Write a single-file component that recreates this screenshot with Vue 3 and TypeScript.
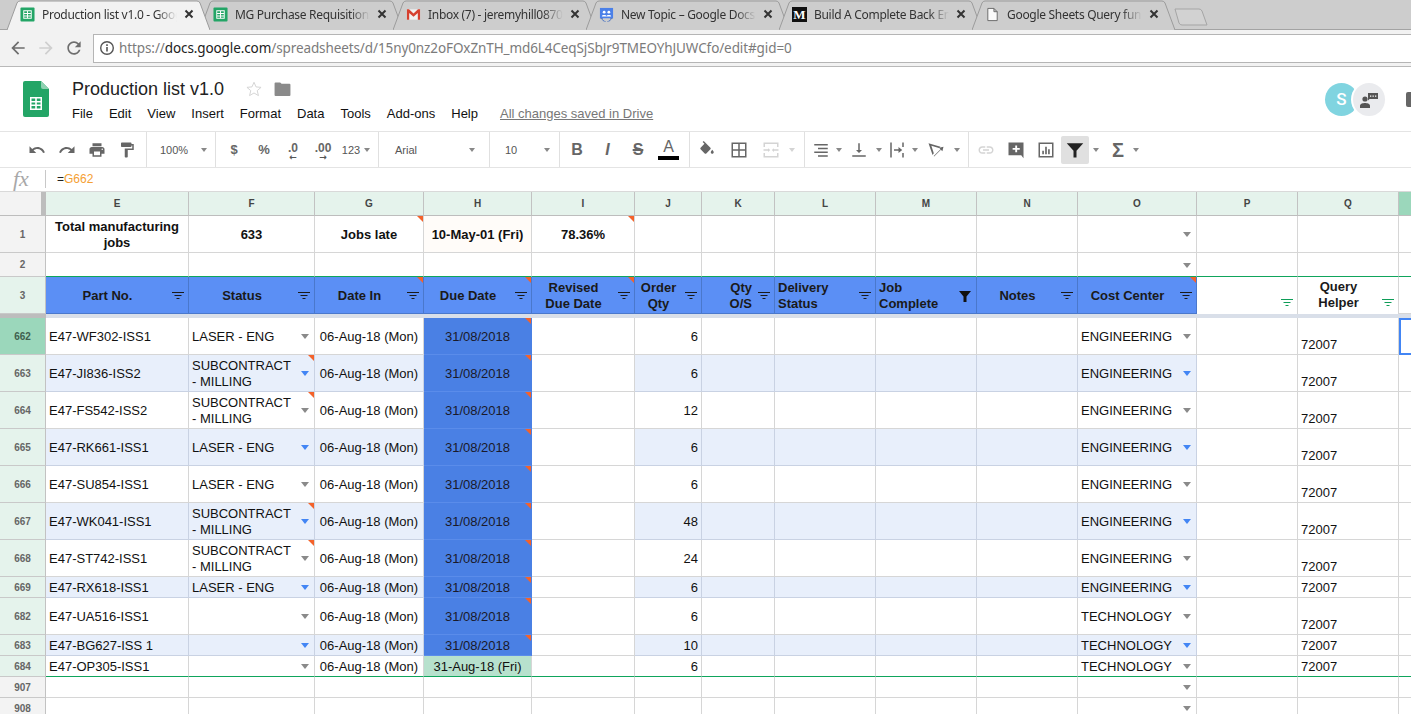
<script setup lang="ts">
interface Tool { w: number; t?: string; d?: string; cls?: string; caret?: boolean; arrow?: string; off?: boolean }
interface Group { w: number; pad: number; items: Tool[] }

const ic = {
  undo: 'M12.5 8c-2.65 0-5.05.99-6.9 2.6L2 7v9h9l-3.62-3.62c1.39-1.16 3.16-1.88 5.12-1.88 3.54 0 6.55 2.31 7.6 5.5l2.37-.78C21.08 11.03 17.15 8 12.5 8z',
  redo: 'M18.4 10.6C16.55 8.99 14.15 8 11.5 8c-4.65 0-8.58 3.03-9.96 7.22L3.9 16c1.05-3.19 4.05-5.5 7.6-5.5 1.95 0 3.73.72 5.12 1.88L13 16h9V7l-3.6 3.6z',
  print: 'M19 8H5c-1.66 0-3 1.34-3 3v6h4v4h12v-4h4v-6c0-1.66-1.34-3-3-3zm-3 11H8v-5h8v5zm3-7c-.55 0-1-.45-1-1s.45-1 1-1 1 .45 1 1-.45 1-1 1zm-1-9H6v4h12V3z',
  paint: 'M18 4V3c0-.55-.45-1-1-1H5c-.55 0-1 .45-1 1v4c0 .55.45 1 1 1h12c.55 0 1-.45 1-1V6h1v4H9v11c0 .55.45 1 1 1h2c.55 0 1-.45 1-1v-9h8V4h-3z',
  fill: 'M16.56 8.94L7.62 0 6.21 1.41l2.38 2.38-5.15 5.15c-.59.59-.59 1.54 0 2.12l5.5 5.5c.29.29.68.44 1.06.44s.77-.15 1.06-.44l5.5-5.5c.59-.58.59-1.53 0-2.12zM19 11.5s-2 2.17-2 3.5c0 1.1.9 2 2 2s2-.9 2-2c0-1.33-2-3.5-2-3.5z',
  borders: 'M2 2v20h20V2H2zm9 18H4v-7h7v7zm0-9H4V4h7v7zm9 9h-7v-7h7v7zm0-9h-7V4h7v7z',
  merge: 'M2 2h20v6h-2V4H4v4H2zM2 16h2v4h16v-4h2v6H2zM2 11h6v2H2zM16 11h6v2h-6zM11 12l-3-2.500v5zM13 12l3-2.500v5z',
  align: 'M3 4h18v2H3zM8 9h13v2H8zM3 14h18v2H3zM8 19h13v2H8z',
  valign: 'M16 12h-3V3h-2v9H8l4 4 4-4zM3 19v2h18v-2H3z',
  wrap: 'M3 2h2v20H3zM19 2h2v6h-2zM19 16h2v6h-2zM8 11h6V8l5 4-5 4v-3H8z',
  rotate: 'M2 3l16 4.500-2.200 1.700-10-2.900 3.300 10-1.700 2.200zM9 20l9-9-2-2 6-1.500-1.500 6-2-2-9 9z',
  link: 'M3.9 12c0-1.71 1.39-3.1 3.1-3.1h4V7H7c-2.76 0-5 2.24-5 5s2.24 5 5 5h4v-1.9H7c-1.71 0-3.1-1.39-3.1-3.1zM8 13h8v-2H8v2zm9-6h-4v1.9h4c1.71 0 3.1 1.39 3.1 3.1s-1.39 3.1-3.1 3.1h-4V17h4c2.76 0 5-2.24 5-5s-2.24-5-5-5z',
  comment: 'M2 2h20v21l-3-4H2zM11 6h2.500v3.300H17v2.400h-3.500V15H11v-3.300H7.500V9.300H11z',
  chart: 'M2 2h20v20H2zM4 4v16h16V4zM7 13h2.200v4.500H7zM10.900 7.500h2.200v10h-2.200zM14.800 11h2.200v6.500h-2.200z',
  filter: 'M1 3h22l-9 10v9h-4v-9z',
}

const groups: Group[] = [
  { w: 147, pad: 22, items: [{ w: 30, d: ic.undo }, { w: 30, d: ic.redo }, { w: 30, d: ic.print }, { w: 30, d: ic.paint }] },
  { w: 69, pad: 13, items: [{ w: 28, t: '100%', cls: 'tx11' }, { w: 32, caret: true }] },
  { w: 163, pad: 3, items: [{ w: 30, t: '$', cls: 'tx-b' }, { w: 30, t: '%', cls: 'tx-b' }, { w: 28, t: '.0', arrow: '←', cls: 'tx-b tx-dec' }, { w: 32, t: '.00', arrow: '→', cls: 'tx-b tx-dec' }, { w: 24, t: '123', cls: 'tx11' }, { w: 8, caret: true }] },
  { w: 111, pad: 16, items: [{ w: 60, t: 'Arial', cls: 'tx11 tx-l' }, { w: 34, caret: true }] },
  { w: 70, pad: 15, items: [{ w: 24, t: '10', cls: 'tx11 tx-l' }, { w: 36, caret: true }] },
  { w: 130, pad: 2, items: [{ w: 30, t: 'B', cls: 'tx-big tx-bold' }, { w: 31, t: 'I', cls: 'tx-big tx-bold tx-it' }, { w: 30, t: 'S', cls: 'tx-big tx-strike' }, { w: 31, t: 'A', cls: 'tx-big tx-color' }] },
  { w: 115, pad: 2, items: [{ w: 30, d: ic.fill }, { w: 34, d: ic.borders }, { w: 30, d: ic.merge, off: true }, { w: 12, caret: true, off: true }] },
  { w: 164, pad: 2, items: [{ w: 28, d: ic.align }, { w: 8, caret: true }, { w: 32, d: ic.valign }, { w: 8, caret: true }, { w: 28, d: ic.wrap }, { w: 8, caret: true }, { w: 34, d: ic.rotate }, { w: 8, caret: true }] },
  { w: 180, pad: 2, items: [{ w: 30, d: ic.link, off: true }, { w: 30, d: ic.comment }, { w: 30, d: ic.chart }, { w: 28, d: ic.filter, cls: 'active' }, { w: 3 }, { w: 8, caret: true }, { w: 4 }, { w: 28, t: 'Σ', cls: 'tx-sigma' }, { w: 8, caret: true }] },
]

const tabs = [
  { title: 'Production list v1.0 - Google Sheets', icon: 'sheet', active: true },
  { title: 'MG Purchase Requisitions - Google', icon: 'sheet' },
  { title: 'Inbox (7) - jeremyhill0870@gmail.com', icon: 'gmail' },
  { title: 'New Topic – Google Docs Help Forum', icon: 'docs' },
  { title: 'Build A Complete Back End with', icon: 'medium' },
  { title: 'Google Sheets Query function tutorial', icon: 'file' },
]

const menu = ['File', 'Edit', 'View', 'Insert', 'Format', 'Data', 'Tools', 'Add-ons', 'Help']
const letters = ['E', 'F', 'G', 'H', 'I', 'J', 'K', 'L', 'M', 'N', 'O', 'P', 'Q']

const sub = 'SUBCONTRACT\n- MILLING'
const laser = 'LASER - ENG'
const eng = 'ENGINEERING'
const tech = 'TECHNOLOGY'

const heads = [
  { t: 'Part No.', c: 'c' }, { t: 'Status', c: 'c' }, { t: 'Date In', c: 'c', note: true }, { t: 'Due Date', c: 'c', note: true },
  { t: 'Revised\nDue Date', c: 'c', note: true }, { t: 'Order\nQty', c: 'c' }, { t: 'Qty\nO/S', c: 'r' }, { t: 'Delivery\nStatus', c: 'l' },
  { t: 'Job\nComplete', c: 'l', on: true }, { t: 'Notes', c: 'c' }, { t: 'Cost Center', c: 'c', note: true },
]

const rows = [
  { n: 662, cls: 'tall', part: 'E47-WF302-ISS1', st: laser, qty: '6', cost: eng, sel: true },
  { n: 663, cls: 'tall band', part: 'E47-JI836-ISS2', st: sub, qty: '6', cost: eng, sn: true },
  { n: 664, cls: 'tall', part: 'E47-FS542-ISS2', st: sub, qty: '12', cost: eng, sn: true },
  { n: 665, cls: 'tall band', part: 'E47-RK661-ISS1', st: laser, qty: '6', cost: eng },
  { n: 666, cls: 'tall', part: 'E47-SU854-ISS1', st: laser, qty: '6', cost: eng },
  { n: 667, cls: 'tall band', part: 'E47-WK041-ISS1', st: sub, qty: '48', cost: eng, sn: true },
  { n: 668, cls: 'tall', part: 'E47-ST742-ISS1', st: sub, qty: '24', cost: eng, sn: true },
  { n: 669, cls: 'short band', part: 'E47-RX618-ISS1', st: laser, qty: '6', cost: eng },
  { n: 682, cls: 'tall', part: 'E47-UA516-ISS1', st: '', qty: '6', cost: tech },
  { n: 683, cls: 'short band', part: 'E47-BG627-ISS 1', st: '', qty: '10', cost: tech },
  { n: 684, cls: 'short last', part: 'E47-OP305-ISS1', st: '', qty: '6', cost: tech },
]
</script>

<template>
  <div class="page">
    <div class="tabstrip">
      <div v-for="tab in tabs" :key="tab.title" class="tab" :class="{ on: tab.active }">
        <svg class="tabshape" viewBox="0 0 203 30" preserveAspectRatio="none">
          <path d="M0 30 L10 3 Q11 1 13 1 L190 1 Q192 1 193 3 L203 30" />
        </svg>
        <svg v-if="tab.icon === 'sheet'" class="fav" viewBox="0 0 16 16">
          <rect x="0.500" y="0.500" width="15" height="15" rx="1" fill="#23a566" />
          <path d="M3.500 3.500h9v9h-9zM4.500 4.500v2h3v-2zM8.500 4.500v2h3v-2zM4.500 7.500v1.500h3V7.500zM8.500 7.500v1.500h3V7.500zM4.500 10v1.500h3V10zM8.500 10v1.500h3V10z" fill="#fff" fill-rule="evenodd" />
        </svg>
        <svg v-else-if="tab.icon === 'gmail'" class="fav" viewBox="0 0 16 16">
          <rect x="1" y="2.500" width="14" height="11" fill="#f1f1f1" />
          <path d="M1 2.500h2.200L8 6.800l4.800-4.300H15v11h-2.400V6.300L8 10.300 3.400 6.300v7.200H1z" fill="#d6402f" />
        </svg>
        <svg v-else-if="tab.icon === 'docs'" class="fav" viewBox="0 0 16 16">
          <rect x="1" y="1" width="14" height="11" fill="#4b80e8" />
          <path d="M1 12h14l-7 4-7-4z M4 12v3l4 1 4-1v-3z" fill="#3a67bf" />
          <circle cx="5.500" cy="5.500" r="1.500" fill="#fff" />
          <circle cx="10.500" cy="5.500" r="1.500" fill="#fff" />
          <path d="M3 10c0-2 5-2 5 0zM8 10c0-2 5-2 5 0z" fill="#fff" />
        </svg>
        <span v-else-if="tab.icon === 'medium'" class="fav fav-m">M</span>
        <svg v-else class="fav" viewBox="0 0 16 16">
          <path d="M3 1.500h6.500L13 5v9.500H3zM9.500 1.500V5H13" fill="#fafafa" stroke="#666" stroke-width="1" />
        </svg>
        <span class="tabtitle">{{ tab.title }}</span>
        <svg class="tabx" viewBox="0 0 10 10"><path d="M1.500 1.500l7 7M8.500 1.500l-7 7" /></svg>
      </div>
      <svg class="newtab" viewBox="0 0 34 18"><path d="M1 1h24q2 0 3 2l5 14H8q-2 0-3-2z" /></svg>
    </div>

    <div class="omnirow">
      <svg class="nav" viewBox="0 0 24 24"><path d="M20 11H7.830l5.590-5.590L12 4l-8 8 8 8 1.410-1.410L7.830 13H20v-2z" fill="#6e6e6e" /></svg>
      <svg class="nav" viewBox="0 0 24 24"><path d="M4 11h12.170l-5.590-5.590L12 4l8 8-8 8-1.410-1.410L16.170 13H4v-2z" fill="#cfcfcf" /></svg>
      <svg class="nav" viewBox="0 0 24 24"><path d="M17.650 6.350C16.200 4.900 14.210 4 12 4c-4.420 0-7.990 3.580-7.990 8s3.570 8 7.990 8c3.730 0 6.840-2.550 7.730-6h-2.080c-.82 2.330-3.040 4-5.650 4-3.310 0-6-2.690-6-6s2.690-6 6-6c1.660 0 3.140.69 4.220 1.780L13 11h7V4l-2.350 2.350z" fill="#6e6e6e" /></svg>
      <div class="omni">
        <svg class="info" viewBox="0 0 16 16"><circle cx="8" cy="8" r="6.300" fill="none" stroke="#555" stroke-width="1.400" /><path d="M7.200 7h1.600v4.500H7.200zM7.200 4.300h1.600v1.600H7.200z" fill="#555" /></svg>
        <span class="url"><span class="dim">https://</span>docs.google.com<span class="dim">/spreadsheets/d/15ny0nz2oFOxZnTH_md6L4CeqSjSbJr9TMEOYhJUWCfo/edit#gid=0</span></span>
      </div>
    </div>

    <header class="docbar">
      <svg class="logo" viewBox="0 0 26 36">
        <path d="M2 0h16l8 8v26a2 2 0 0 1-2 2H2a2 2 0 0 1-2-2V2a2 2 0 0 1 2-2z" fill="#23a566" />
        <path d="M18 0l8 8h-6a2 2 0 0 1-2-2z" fill="#8ed1b1" />
        <path d="M7 16h12v13H7zM8.500 17.500v2.500h3.700v-2.500zM13.800 17.500v2.500h3.700v-2.500zM8.500 21.500v2h3.700v-2zM13.800 21.500v2h3.700v-2zM8.500 25v2.500h3.700V25zM13.800 25v2.500h3.700V25z" fill="#fff" fill-rule="evenodd" />
      </svg>
      <div class="docmain">
        <div class="titlerow">
          <span class="doctitle">Production list v1.0</span>
          <svg class="star" viewBox="0 0 24 24"><path d="M12 3l2.700 6.200 6.700.6-5.100 4.400 1.600 6.600L12 17.300l-5.900 3.500 1.600-6.600-5.100-4.400 6.700-.6z" fill="none" stroke="#d4d4d4" stroke-width="1.300" /></svg>
          <svg class="folder" viewBox="0 0 17 15"><path d="M0 1.500q0-1 1-1h5l1.500 1.500H16q1 0 1 1V14q0 1-1 1H1q-1 0-1-1z" fill="#8a8a8a" /></svg>
        </div>
        <nav class="menurow">
          <span v-for="m in menu" :key="m" class="menuitem">{{ m }}</span>
          <span class="saved">All changes saved in Drive</span>
        </nav>
      </div>
      <div class="people">
        <span class="ava-s">S</span>
        <span class="ava-c">
          <svg viewBox="0 0 20 16" width="20" height="16">
            <circle cx="6" cy="7" r="2.600" fill="#555" />
            <path d="M1 16v-2.500c0-1.700 3-2.500 5-2.500s5 .8 5 2.500V16z" fill="#555" />
            <path d="M9 1h10v6h-8.500L9 8.500z" fill="#555" />
            <path d="M11 3.500h1.300v1.300H11zM13.500 3.500h1.300v1.300h-1.300zM16 3.500h1.300v1.300H16z" fill="#fff" />
          </svg>
        </span>
        <span class="cmt"></span>
      </div>
    </header>

    <div class="toolbar">
      <div v-for="(g, gi) in groups" :key="gi" class="tgroup" :style="{ width: g.w + 'px', paddingLeft: g.pad + 'px' }">
        <div v-for="(it, i) in g.items" :key="i" class="titem" :class="[it.cls, { off: it.off }]" :style="{ width: it.w + 'px' }">
          <span v-if="it.caret" class="tcaret"></span>
          <svg v-else-if="it.d" viewBox="0 0 24 24" width="18" height="18"><path :d="it.d" fill-rule="evenodd" /></svg>
          <template v-else-if="it.t">
            <span class="ttext">{{ it.t }}</span>
            <span v-if="it.arrow" class="tarrow">{{ it.arrow }}</span>
            <span v-if="it.cls === 'tx-big tx-color'" class="colorbar"></span>
          </template>
        </div>
      </div>
    </div>

    <div class="formula">
      <span class="fx">fx</span>
      <span class="fsep"></span>
      <span class="ftext">=<span class="fref">G662</span></span>
    </div>

    <div class="sheet">
      <div class="grow chead">
        <div class="corner"></div>
        <div v-for="l in letters" :key="l" class="ch">{{ l }}</div>
        <div class="ch selcol"></div>
      </div>

      <div class="grow r1">
        <div class="rh">1</div>
        <div class="cell bold center">Total manufacturing<br />jobs</div>
        <div class="cell bold center">633</div>
        <div class="cell bold center note">Jobs late</div>
        <div class="cell bold center cream">10-May-01 (Fri)</div>
        <div class="cell bold center note">78.36%</div>
        <div class="cell"></div><div class="cell"></div><div class="cell"></div><div class="cell"></div><div class="cell"></div>
        <div class="cell dd"><span></span><i class="caret"></i></div>
        <div class="cell"></div><div class="cell"></div><div class="edge"></div>
      </div>

      <div class="grow r2">
        <div class="rh">2</div>
        <div class="cell gl"></div><div class="cell gl"></div><div class="cell gl"></div><div class="cell gl"></div><div class="cell gl"></div>
        <div class="cell gl"></div><div class="cell gl"></div><div class="cell gl"></div><div class="cell gl"></div><div class="cell gl"></div>
        <div class="cell gl dd"><span></span><i class="caret"></i></div>
        <div class="cell gl"></div><div class="cell gl"></div><div class="edge gl"></div>
      </div>

      <div class="grow r3">
        <div class="rh active-lite">3</div>
        <div v-for="h in heads" :key="h.t" class="hcell" :class="{ note: h.note }">
          <span class="htext" :class="h.c">{{ h.t }}</span>
          <svg v-if="h.on" class="fon" viewBox="0 0 12 12"><path d="M0 1h12L7.500 6.500V12h-3V6.500z" /></svg>
          <svg v-else class="fico" viewBox="0 0 12 7"><path d="M0 .5h12M2.500 3.500h7M4.500 6.500h3" /></svg>
        </div>
        <div class="hcell plainh"><span class="htext"></span><svg class="fico green" viewBox="0 0 12 7"><path d="M0 .5h12M2.500 3.500h7M4.500 6.500h3" /></svg></div>
        <div class="hcell plainh"><span class="htext c">Query
Helper</span><svg class="fico green" viewBox="0 0 12 7"><path d="M0 .5h12M2.500 3.500h7M4.500 6.500h3" /></svg></div>
        <div class="edge"></div>
      </div>

      <div class="freeze"><div class="fz-rh"></div><div class="fz-main"></div></div>

      <div v-for="r in rows" :key="r.n" class="grow drow" :class="r.cls">
        <div class="rh" :class="r.sel ? 'active' : 'active-lite'">{{ r.n }}</div>
        <div class="cell b">{{ r.part }}</div>
        <div class="cell b dd" :class="{ note: r.sn }"><span class="pre">{{ r.st }}</span><i class="caret"></i></div>
        <div class="cell b center">06-Aug-18 (Mon)</div>
        <div v-if="r.n === 684" class="cell due-green center">31-Aug-18 (Fri)</div>
        <div v-else class="cell due center note">31/08/2018</div>
        <div class="cell"></div>
        <div class="cell b right">{{ r.qty }}</div>
        <div class="cell b"></div>
        <div class="cell b"></div>
        <div class="cell b"></div>
        <div class="cell b"></div>
        <div class="cell b dd"><span>{{ r.cost }}</span><i class="caret"></i></div>
        <div class="cell"></div>
        <div class="cell helper">72007</div>
        <div class="edge" :class="{ picked: r.sel }"></div>
      </div>

      <div v-for="n in [907, 908]" :key="n" class="grow short">
        <div class="rh">{{ n }}</div>
        <div class="cell"></div><div class="cell"></div><div class="cell"></div><div class="cell"></div><div class="cell"></div>
        <div class="cell"></div><div class="cell"></div><div class="cell"></div><div class="cell"></div><div class="cell"></div>
        <div class="cell dd"><span></span><i class="caret"></i></div>
        <div class="cell"></div><div class="cell"></div><div class="edge"></div>
      </div>
    </div>
  </div>
</template>

<style>
html, body { margin: 0; padding: 0; overflow: hidden; background: #fff; }
</style>

<style scoped>
.page { width: 1411px; height: 714px; overflow: hidden; display: flex; flex-direction: column; font-family: "Liberation Sans", Arial, sans-serif; color: #111; }

.tabstrip { height: 30px; flex: none; background: #cdcdcd; display: flex; padding-left: 7px; box-sizing: border-box; border-bottom: 1px solid #a3a3a3; }
.tab { position: relative; width: 203px; height: 30px; margin-right: -10px; display: flex; align-items: center; padding: 0 16px 2px 13px; box-sizing: border-box; flex: none; }
.tabshape { position: absolute; left: 0; top: 0; width: 100%; height: 100%; }
.tabshape path { fill: #cdcdcd; stroke: #9b9b9b; stroke-width: 1; vector-effect: non-scaling-stroke; }
.tab.on { z-index: 2; }
.tab.on .tabshape path { fill: #f2f2f2; }
.fav { position: relative; width: 15px; height: 15px; flex: none; margin-right: 7px; }
.fav-m { background: #111; color: #fff; font: bold 13px/15px "Liberation Serif", serif; text-align: center; }
.tabtitle { position: relative; flex: 1; min-width: 0; white-space: nowrap; overflow: hidden; font: 12px "Noto Sans", sans-serif; letter-spacing: -0.300px; color: #333; -webkit-mask-image: linear-gradient(to right, #000 85%, transparent 100%); mask-image: linear-gradient(to right, #000 85%, transparent 100%); }
.tabx { position: relative; width: 10px; height: 10px; flex: none; margin-left: 7px; }
.tabx path { stroke: #333; stroke-width: 2; fill: none; }
.newtab { width: 34px; height: 18px; margin: 8px 0 0 9px; flex: none; }
.newtab path { fill: #d2d2d2; stroke: #a5a5a5; stroke-width: 1; }

.omnirow { height: 37px; flex: none; background: #f2f2f2; border-bottom: 1px solid #b9b9b9; box-sizing: border-box; display: flex; align-items: center; padding-left: 8px; }
.nav { width: 20px; height: 20px; margin-right: 8px; flex: none; }
.omni { flex: 1; height: 29px; margin-left: 1px; background: #fff; border: 1px solid #b5b5b5; border-right: none; box-sizing: border-box; display: flex; align-items: center; padding-left: 5px; }
.info { width: 16px; height: 16px; margin-right: 4px; }
.url { font: 13.500px "Noto Sans", sans-serif; letter-spacing: -0.100px; color: #222; white-space: nowrap; }
.dim { color: #7b7b7b; }

.docbar { height: 65px; flex: none; display: flex; box-sizing: border-box; padding: 14px 0 0 23px; border-bottom: 1px solid #e4e4e4; }
.logo { width: 26px; height: 36px; flex: none; }
.docmain { margin-left: 23px; display: flex; flex-direction: column; }
.titlerow { display: flex; align-items: center; height: 18px; margin-top: -1px; }
.doctitle { font-size: 18px; color: #222; }
.star { width: 18px; height: 18px; margin-left: 21px; }
.folder { width: 17px; height: 14px; margin-left: 11px; }
.menurow { display: flex; align-items: center; margin-top: 7px; height: 16px; font-size: 13px; color: #111; }
.menuitem { margin-right: 16px; }
.saved { margin-left: 6px; color: #777; text-decoration: underline; }
.people { margin-left: auto; display: flex; align-items: flex-start; padding-top: 2px; }
.ava-s { width: 33px; height: 33px; border-radius: 50%; background: #80d4e0; color: #fff; font: 500 17px/33px "Roboto", sans-serif; text-align: center; }
.ava-c { width: 32px; height: 33px; margin-left: -5px; border-radius: 50%; background: #eaebee; box-shadow: 0 0 0 2px #fff; display: flex; align-items: center; justify-content: center; position: relative; }
.cmt { width: 16px; height: 15px; background: #666; border-radius: 2px; margin: 9px -11px 0 21px; }

.toolbar { height: 36px; flex: none; display: flex; box-sizing: border-box; border-bottom: 1px solid #e4e4e4; }
.tgroup { display: flex; align-items: center; height: 35px; box-sizing: border-box; border-right: 1px solid #e0e0e0; flex: none; }
.tgroup:last-child { border-right: none; }
.titem { display: flex; flex-direction: column; align-items: center; justify-content: center; flex: none; height: 28px; position: relative; box-sizing: border-box; }
.titem svg { fill: #666; }
.titem.off svg { fill: #d4d4d4; }
.titem.active { background: #e0e0e0; border-radius: 2px; }
.titem.active svg { fill: #222; }
.tcaret { width: 0; height: 0; border-left: 3.500px solid transparent; border-right: 3.500px solid transparent; border-top: 4px solid #888; }
.titem.off .tcaret { border-top-color: #d4d4d4; }
.ttext { color: #555; font-size: 12px; line-height: 14px; white-space: nowrap; }
.tx11 .ttext { font-size: 11px; }
.tx-l { align-items: flex-start; }
.tx-b .ttext { font-size: 13px; font-weight: bold; color: #666; }
.tx-dec { padding-top: 5px; }
.tx-dec .ttext { line-height: 10px; font-size: 12px; }
.tarrow { color: #555; font: bold 9px/8px "DejaVu Sans", sans-serif; }
.tx-big .ttext { font-size: 16px; color: #666; }
.tx-bold .ttext { font-weight: bold; }
.tx-it .ttext { font-style: italic; }
.tx-strike .ttext { text-decoration: line-through; text-decoration-thickness: 2px; font-weight: bold; }
.tx-color .ttext { line-height: 16px; margin-top: -1px; }
.colorbar { width: 21px; height: 4px; background: #000; margin-top: 1px; }
.tx-sigma .ttext { font-size: 20px; font-weight: bold; color: #666; }

.formula { height: 24px; flex: none; display: flex; align-items: center; box-sizing: border-box; border-bottom: 1px solid #d9d9d9; padding-bottom: 2px; }
.fx { width: 45px; padding-left: 13px; box-sizing: border-box; font: italic 22px/20px "Liberation Serif", serif; color: #a8a8a8; }
.fsep { width: 1px; height: 18px; background: #c8c8c8; }
.ftext { margin-left: 11px; font-size: 12px; color: #222; }
.fref { color: #f5a033; }

.sheet { flex: none; }
.grow { display: grid; grid-template-columns: 46px 143px 126px 109px 108px 103px 67px 73px 101px 101px 101px 119px 101px 101px 12px; }
.chead { height: 24px; }
.corner { background: #f3f3f3; border-right: 5px solid #bdbdbd; border-bottom: 1px solid #bdbdbd; box-sizing: border-box; }
.ch { background: #e5f3ec; border-right: 1px solid #c2c2c2; border-bottom: 1px solid #bdbdbd; box-sizing: border-box; display: flex; align-items: center; justify-content: center; font-size: 10px; font-weight: bold; color: #444; }
.selcol { background: #9bd7bb; border-right: none; }
.rh { background: #f3f3f3; border-right: 1px solid #c2c2c2; border-bottom: 1px solid #c9c9c9; box-sizing: border-box; display: flex; align-items: center; justify-content: center; font-size: 10px; font-weight: bold; color: #666; }
.active-lite { background: #e5f3ec; }
.active { background: #9bd7bb; color: #3f5f4f; }
.cell { position: relative; border-right: 1px solid #d6d6d6; border-bottom: 1px solid #d6d6d6; box-sizing: border-box; display: flex; align-items: center; padding: 1px 3px 0; font-size: 13px; line-height: 16px; white-space: nowrap; min-width: 0; }
.edge { border-bottom: 1px solid #d6d6d6; box-sizing: border-box; position: relative; }
.bold { font-weight: bold; }
.center { justify-content: center; text-align: center; }
.right { justify-content: flex-end; }
.cream { background: #fffcf9; }
.dd { justify-content: space-between; padding-right: 5px; }
.caret { width: 0; height: 0; flex: none; border-left: 4px solid transparent; border-right: 4px solid transparent; border-top: 5px solid #8a8a8a; }
.note::after { content: ""; position: absolute; right: 0; top: 0; width: 0; height: 0; border-left: 6px solid transparent; border-top: 6px solid #f4622a; }
.r1 { height: 37px; }
.r2 { height: 24px; }
.gl { border-bottom-color: #0fa55c; }
.r3 { height: 37px; }
.hcell { position: relative; background: #5b8ff5; border-right: 1px solid #4a78cc; border-bottom: 1px solid #4a78cc; box-sizing: border-box; display: flex; align-items: center; padding: 1px 4px 0 3px; font-size: 13px; line-height: 16px; font-weight: bold; color: #1a1a1a; min-width: 0; }
.htext { flex: 1; white-space: pre-line; min-width: 0; }
.htext.c { text-align: center; }
.htext.r { text-align: right; }
.htext.l { text-align: left; }
.plainh { background: #fff; border-right: 1px solid #d6d6d6; border-bottom: none; padding-top: 0; padding-bottom: 1px; }
.fico { width: 12px; height: 7px; flex: none; margin-left: 6px; }
.fico path { stroke: #1a1a1a; stroke-width: 1; fill: none; }
.fico.green { margin-top: 14px; }
.fico.green path { stroke: #0f9d58; }
.fon { width: 12px; height: 12px; flex: none; margin: 0 1px 0 5px; fill: #111; }
.freeze { display: flex; height: 4px; }
.fz-rh { width: 46px; background: #bdbdbd; }
.fz-main { flex: 1; background: #d9dfe9; }
.tall { height: 37px; }
.short { height: 21px; }
.pre { white-space: pre-line; }
.band .b { background: #e8effb; border-color: #c9d2e3; }
.band .b.dd .caret { border-top-color: #4285f4; }
.due { background: #4a80e4; color: #1a1a2a; border-color: #4a80e4; border-bottom-color: #5a8cea; }
.due-green { background: #b7e1cd; }
.last .cell { border-bottom-color: #0fa55c; }
.last .edge { border-bottom-color: #0fa55c; }
.helper { align-items: flex-end; padding-bottom: 1px; }
.short .helper { align-items: center; padding-bottom: 0; }
.picked { border: 2px solid #4285f4; border-right: none; }
</style>
